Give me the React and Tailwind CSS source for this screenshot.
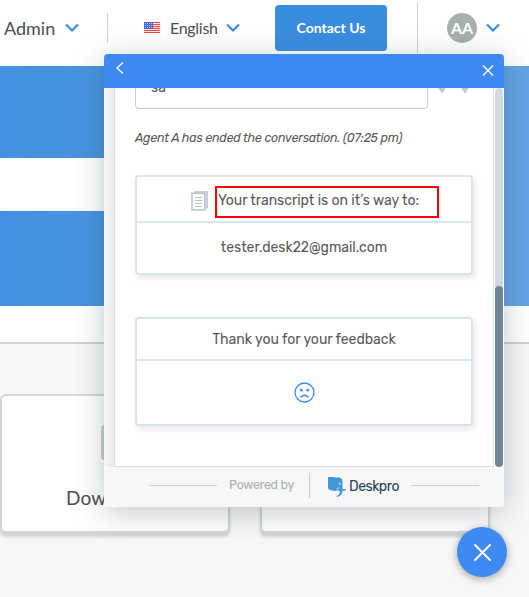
function Chevron({ className }) {
  return (
    <svg className={className} viewBox="0 0 14 10" fill="none" stroke="#3a8dde" strokeWidth="2.2">
      <path d="M1 1.5 L7 7.5 L13 1.5" />
    </svg>
  );
}

function Flag() {
  return (
    <svg className="mb-[2px] h-[11px] w-4 shrink-0" viewBox="0 0 16 11" shapeRendering="crispEdges">
      <rect width="16" height="11" fill="#fde4e2" />
      {[0, 2, 4, 6, 8, 10].map((y) => (
        <rect key={y} y={y} width="16" height="1" fill="#f2453b" />
      ))}
      <rect width="9" height="7" fill="#4166d5" />
      {[1, 3, 5].map((y) =>
        [1, 3, 5, 7].map((x) => <rect key={`${x}-${y}`} x={x} y={y} width="1" height="1" fill="#b9c9f5" />)
      )}
    </svg>
  );
}

function Header() {
  return (
    <header className="flex h-[66px] bg-white text-[#4c4f50]">
      <div className="flex h-[57px] w-[107px] items-center pl-[4px]">
        <span className="w-[52px] whitespace-nowrap text-[18px]">Admin</span>
        <Chevron className="mb-[2px] ml-[9px] h-[10px] w-[14px]" />
      </div>
      <div className="mt-[13px] h-[30px] w-px bg-[#cfd2d2]" />
      <div className="flex h-[57px] w-[167px] items-center pl-[36px]">
        <Flag />
        <span className="mb-px ml-[10px] w-[47px] whitespace-nowrap text-[16px] tracking-[-0.3px]">English</span>
        <Chevron className="mb-[2px] ml-[9px] h-[10px] w-[14px]" />
      </div>
      <button className="mt-[5px] h-[46px] w-[112px] rounded-[4px] bg-[#3a8dde] pb-[2px] text-[14px] font-bold text-white">
        Contact Us
      </button>
      <div className="ml-[30px] mt-[3px] h-[50px] w-px bg-[#cfd2d2]" />
      <div className="ml-[29px] mt-[13px] flex h-[30px] w-[30px] items-center justify-center rounded-full bg-[#a8b0af] pb-px text-[16px] font-bold text-white">
        AA
      </div>
      <Chevron className="ml-[9px] mt-[23px] h-[10px] w-[14px]" />
    </header>
  );
}

function TopicCard({ children }) {
  return (
    <div className="h-[139px] w-[230px] shrink-0 rounded-[6px] border-2 border-[#d2d6d5] bg-white shadow-[0_4px_3px_rgba(0,0,0,0.15)]">
      {children}
    </div>
  );
}

function Portal() {
  return (
    <>
      <Header />
      <div className="h-[240px] bg-gradient-to-r from-[#4290df] to-[#64a4e4] pt-[92px]">
        <div className="h-[53px] w-[480px] bg-white" />
      </div>
      <div className="h-[38px] border-b-2 border-[#ced3d2] bg-white" />
      <div className="flex gap-[30px] pt-[50px]">
        <TopicCard>
          <div className="ml-[99px] mt-[28px] h-[37px] w-[34px] rounded-[5px] bg-[#c9cecd]" />
          <div className="ml-[64px] mt-[25px] text-[19px] leading-[24px] tracking-[0.2px] text-[#4c4f50]">Downloads</div>
        </TopicCard>
        <TopicCard />
      </div>
    </>
  );
}

function TranscriptIcon() {
  return (
    <svg className="h-[20px] w-[17px] shrink-0" viewBox="0 0 17 20" fill="none" stroke="#b4c4d1">
      <path d="M3.5 2 V0.8 H16.2 V17 H14" fill="#dce5ec" strokeWidth="1.2" />
      <rect x="1" y="2.3" width="12.8" height="16.6" fill="white" strokeWidth="1.5" />
      <path d="M4 6.5 H11 M4 9.5 H11 M4 12.5 H11 M4 15.5 H11" strokeWidth="1.1" />
    </svg>
  );
}

function SadFace() {
  return (
    <svg className="h-[21px] w-[21px]" viewBox="0 0 21 21" fill="none" stroke="#3f89f3">
      <circle cx="10.5" cy="10.5" r="9.5" strokeWidth="1.3" />
      <circle cx="7.3" cy="8.2" r="1.4" fill="#3f89f3" stroke="none" />
      <circle cx="13.7" cy="8.2" r="1.4" fill="#3f89f3" stroke="none" />
      <path d="M7 14.8 Q10.5 11.8 14 14.8" strokeWidth="1.6" strokeLinecap="round" />
    </svg>
  );
}

function DeskproMark() {
  return (
    <svg className="h-[20px] w-[19px] shrink-0" viewBox="0 0 19 20">
      <path d="M0 0 H5 Q7 0 8 .8 Q10 0 12 .7 Q14.3 1.6 14.5 4.2 V12.2 H18.4 Q17.5 14 14.5 14.1 Q14.4 19.2 8.7 20 V18.7 Q12 18 11.8 14.2 Q10.8 14.2 10 13.2 Q8 14.4 4.5 13.6 Q0 13 0 10.5 Z" fill="#4297d8" />
      <path d="M8.3 12.2 Q11 12.5 11 10" stroke="#f7f7f7" strokeWidth=".6" fill="none" />
      <circle cx="11.7" cy="6.7" r=".9" fill="#f7f7f7" />
    </svg>
  );
}

function MessageCard({ className, children }) {
  return (
    <div className={`w-[338px] rounded-[4px] border-2 border-[#dae4ec] bg-white shadow-[2px_3px_6px_rgba(0,0,0,0.10)] ${className}`}>
      {children}
    </div>
  );
}

function ChatWidget() {
  return (
    <section className="absolute left-[104px] top-[54px] flex h-[453px] w-[400px] flex-col overflow-hidden rounded-[4px] bg-[#f7f7f7] font-[Rubik,Roboto,sans-serif] text-[#58595b]">
      <div className="flex h-[34px] shrink-0 justify-between bg-[#3f89f3] pl-[12px] pr-[10px]">
        <svg className="mt-[8px] h-[12px] w-[8px]" viewBox="0 0 8 12" fill="none" stroke="white" strokeWidth="1.3">
          <path d="M7 .5 L1 6 L7 11.5" />
        </svg>
        <svg className="mt-[11px] h-[11px] w-[12px]" viewBox="0 0 12 11" fill="none" stroke="white" strokeWidth="1.4">
          <path d="M1 .5 L11 10.5 M11 .5 L1 10.5" />
        </svg>
      </div>
      <div className="flex h-[379px] shrink-0">
        <div className="w-[10px] bg-gradient-to-r from-[#f7f7f7] to-[#e9e9e9]" />
        <div className="h-[379px] w-[380px] overflow-hidden border-x border-b border-[#dcdddd] bg-white pl-[20px]">
          <div className="flex h-[21px]">
            <div className="h-[21px] w-[293px] overflow-hidden rounded-b-[4px] border-x border-b border-[#cccfd0] pl-[15px]">
              <div className="-mt-[9px] text-[14px] leading-[18px]">sa</div>
            </div>
            <svg className="ml-[10px] h-[6px] w-[31px]" viewBox="0 0 31 6" fill="#c8c8c8">
              <path d="M0 0 H8 L4.5 5 H3.5 Z M23 0 H31 L27.5 5 H26.5 Z" />
            </svg>
          </div>
          <div className="mt-[20px] w-[280px] whitespace-nowrap text-[12.5px] italic leading-[18px] tracking-[-0.26px]">
            Agent A has ended the conversation. (07:25 pm)
          </div>
          <MessageCard className="mt-[28px] h-[100px]">
            <div className="flex h-[46px] items-start border-b-2 border-[#dae4ec] pl-[54px] pt-[9px]">
              <div className="mt-[5px] flex">
                <TranscriptIcon />
              </div>
              <div className="ml-[7px] h-[32px] w-[224px] whitespace-nowrap border-2 border-[#ff0000] pl-[1px] text-[14px] leading-[25px] tracking-[-0.03px]">
                Your transcript is on it’s way to:
              </div>
            </div>
            <div className="flex h-[50px] items-center justify-center pb-[2px] text-[14px] tracking-[-0.04px]">
              tester.desk22@gmail.com
            </div>
          </MessageCard>
          <MessageCard className="mt-[42px] h-[109px]">
            <div className="flex h-[42px] items-center justify-center border-b-2 border-[#dae4ec] text-[14px]">
              Thank you for your feedback
            </div>
            <div className="flex h-[63px] items-center justify-center">
              <SadFace />
            </div>
          </MessageCard>
        </div>
        <div className="w-[10px] bg-white pl-px">
          <div className="h-[379px] w-[8px] rounded-[4px] bg-[#d1dae1] pt-[198px]">
            <div className="h-[181px] w-[8px] rounded-[4px] bg-[#6f8596]" />
          </div>
        </div>
      </div>
      <footer className="flex h-[40px] shrink-0 items-center pl-[45px]">
        <div className="mb-[4px] h-px w-[68px] bg-[#cdd0d1]" />
        <span className="mb-[3px] ml-[12px] w-[66px] whitespace-nowrap text-[12.5px] tracking-[-0.3px] text-[#a8afaf]">Powered by</span>
        <div className="mb-[3px] ml-[14px] h-[25px] w-px bg-[#cdd0d1]" />
        <div className="ml-[18px] flex">
          <DeskproMark />
        </div>
        <span className="mb-[1px] ml-[2px] w-[51px] whitespace-nowrap text-[14px] tracking-[-0.5px] text-[#263f55]">Deskpro</span>
        <div className="mb-[4px] ml-[11px] h-px w-[68px] bg-[#cdd0d1]" />
      </footer>
    </section>
  );
}

export default function App() {
  return (
    <main className="relative h-[597px] w-[529px] overflow-hidden bg-[#f7f7f7] font-[Lato,sans-serif]">
      <Portal />
      <div className="absolute left-[104px] top-[54px] h-[453px] w-[400px] rounded-[4px] shadow-[0_5px_30px_rgba(27,50,65,0.27)]" />
      <ChatWidget />
      <button className="absolute left-[457px] top-[527px] flex h-[50px] w-[50px] items-center justify-center rounded-full bg-[#3f89f3] shadow-[0_2px_8px_rgba(0,0,0,0.35)]">
        <svg className="h-[17px] w-[17px]" viewBox="0 0 17 17" fill="none" stroke="white" strokeWidth="1.9" strokeLinecap="round">
          <path d="M1 1 L16 16 M16 1 L1 16" />
        </svg>
      </button>
    </main>
  );
}
